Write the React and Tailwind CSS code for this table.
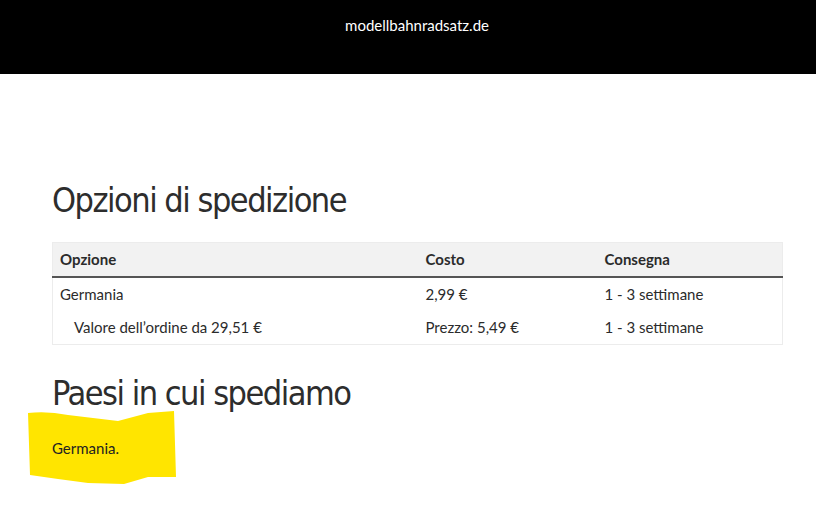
export default function App() {
  const rows = [
    { option: "Germania", cost: "2,99 €", time: "1 - 3 settimane", sub: false },
    { option: "Valore dell’ordine da 29,51 €", cost: "Prezzo: 5,49 €", time: "1 - 3 settimane", sub: true },
  ];

  return (
    <div className="min-h-screen bg-white text-[#2b2b2b] font-['Lato',sans-serif]">
      {/* header */}
      <div className="h-[74px] bg-black flex justify-center pt-[14px] pl-[18px]">
        <span className="text-white text-[15px]">modellbahnradsatz.de</span>
      </div>

      <div className="px-[52px] pt-[104px]">
        <h1 className="text-[34px] leading-[44px] tracking-[-1.5px] text-[#2d2d2d] font-['DejaVu_Sans_Condensed',sans-serif]">
          Opzioni di spedizione
        </h1>

        <table className="w-[731px] mt-[20px] border border-[#ececec] border-collapse text-[15px]">
          <thead>
            <tr className="bg-[#f2f2f2] border-b-2 border-[#555]">
              <th className="text-left font-bold h-[34px] pl-[7px] w-[366px]">Opzione</th>
              <th className="text-left font-bold pl-[7px] w-[179px]">Costo</th>
              <th className="text-left font-bold pl-[7px]">Consegna</th>
            </tr>
          </thead>
          <tbody>
            {rows.map((r) => (
              <tr key={r.option} className="h-[34px]">
                <td className={r.sub ? "pl-[21px]" : "pl-[7px]"}>{r.option}</td>
                <td className="pl-[7px]">{r.cost}</td>
                <td className="pl-[7px]">{r.time}</td>
              </tr>
            ))}
          </tbody>
        </table>

        <h2 className="mt-[26px] text-[34px] leading-[44px] tracking-[-1.5px] text-[#2d2d2d] font-['DejaVu_Sans_Condensed',sans-serif]">
          Paesi in cui spediamo
        </h2>

        <div className="relative -mt-[4px] -ml-[24px] w-[148px] h-[74px] flex items-center pl-[24px]">
          <svg className="absolute inset-0" width="148" height="74" viewBox="0 0 148 74">
            <path d="M0 2 Q20 0 40 4 L90 10 L120 2 L146 0 L148 66 L120 66 L96 73 L60 72 L30 68 L2 64 Z" fill="#ffe500" />
          </svg>
          <span className="relative text-[15px] text-[#222]">Germania.</span>
        </div>
      </div>
    </div>
  );
}
